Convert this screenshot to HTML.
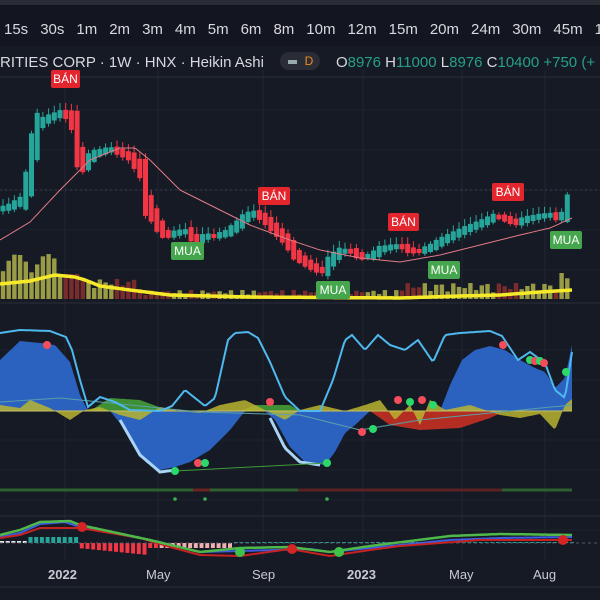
<!DOCTYPE html>
<html><head><meta charset="utf-8"><style>
html,body{margin:0;padding:0;background:#161a25;width:600px;height:600px;overflow:hidden;font-family:"Liberation Sans",sans-serif}
#top{position:absolute;left:0;top:0;width:600px;height:46px;background:#131620;border-top:5px solid #2a2d36;box-sizing:border-box}
#tf{position:absolute;top:16px;left:4px;color:#d8d9de;font-size:15px;white-space:nowrap;word-spacing:0}
#tf span{margin-right:12px}
#title{position:absolute;top:54px;left:0;color:#d8d9de;font-size:15px;white-space:nowrap}
.g{color:#26a08a}
.lbl{position:absolute;color:#fff;font-size:12px;text-align:center;border-radius:2px;line-height:18px}
.r{background:#e3262d}.gr{background:#45a64d}
.ax{position:absolute;top:567px;color:#c9cbd1;font-size:13px}
svg{position:absolute;left:0;top:0}
</style></head><body>
<div id="top"><div id="tf"><span>15s</span><span>30s</span><span>1m</span><span>2m</span><span>3m</span><span>4m</span><span>5m</span><span>6m</span><span>8m</span><span>10m</span><span>12m</span><span>15m</span><span>20m</span><span>24m</span><span>30m</span><span>45m</span><span>1</span></div></div>
<svg id="s" width="600" height="600"></svg>
<div id="title">RITIES CORP · 1W · HNX · Heikin Ashi<span style="display:inline-block;margin-left:16px;width:40px;height:18px;background:#2a2d36;border-radius:9px;vertical-align:middle;position:relative;top:-2px;font-size:12px;color:#f08a24;text-align:right;line-height:18px"><span style="display:inline-block;width:9px;height:4px;background:#9aa;margin-right:8px;vertical-align:middle"></span>D&nbsp;&nbsp;</span><span style="margin-left:16px">O<span class="g">8976</span> H<span class="g">11000</span> L<span class="g">8976</span> C<span class="g">10400 +750 (+</span></span></div>
<div class="lbl r" style="left:51px;top:70px;width:29px">BÁN</div>
<div class="lbl r" style="left:258px;top:187px;width:32px">BÁN</div>
<div class="lbl r" style="left:388px;top:213px;width:31px">BÁN</div>
<div class="lbl r" style="left:492px;top:183px;width:32px">BÁN</div>
<div class="lbl gr" style="left:171px;top:242px;width:33px">MUA</div>
<div class="lbl gr" style="left:316px;top:281px;width:34px">MUA</div>
<div class="lbl gr" style="left:428px;top:261px;width:32px">MUA</div>
<div class="lbl gr" style="left:550px;top:231px;width:32px">MUA</div>
<div class="ax" style="left:48px;font-weight:bold">2022</div>
<div class="ax" style="left:146px">May</div>
<div class="ax" style="left:252px">Sep</div>
<div class="ax" style="left:347px;font-weight:bold">2023</div>
<div class="ax" style="left:449px">May</div>
<div class="ax" style="left:533px">Aug</div>
<script>
const S=document.getElementById('s');let h='';
function interp(pts,x){for(let i=0;i<pts.length-1;i++){if(x>=pts[i][0]&&x<=pts[i+1][0]){const t=(x-pts[i][0])/(pts[i+1][0]-pts[i][0]);return pts[i][1]+t*(pts[i+1][1]-pts[i][1]);}}return pts[pts.length-1][1];}
function path(pts,step){let d='';for(let x=pts[0][0];x<=pts[pts.length-1][0];x+=step||2){d+=(d?'L':'M')+x+' '+interp(pts,x).toFixed(1);}return d;}
function area(pts,base){return path(pts)+'L'+pts[pts.length-1][0]+' '+base+'L'+pts[0][0]+' '+base+'Z';}
[65,158,263,363,462,545].forEach(x=>h+=`<line x1="${x}" y1="70" x2="${x}" y2="560" stroke="#222633"/>`);
[110,150,190,230,270,350,380,440,470,500,530].forEach(y=>h+=`<line x1="0" y1="${y}" x2="600" y2="${y}" stroke="#1d212c"/>`);
h+=`<line x1="0" y1="77" x2="600" y2="77" stroke="#2a2d36"/>`;
h+=`<line x1="0" y1="190" x2="600" y2="190" stroke="#3a3f4c" stroke-dasharray="2 3"/>`;
h+=`<line x1="0" y1="303" x2="600" y2="303" stroke="#2a2d36"/><line x1="0" y1="516" x2="600" y2="516" stroke="#2a2d36"/><line x1="0" y1="587" x2="600" y2="587" stroke="#2a2d36"/>`;
const P=[[0,208],[10,205],[22,198],[28,170],[35,125],[45,118],[60,112],[70,117],[75,140],[80,170],[85,160],[95,152],[110,148],[120,152],[130,157],[140,172],[145,200],[155,222],[165,235],[175,232],[185,230],[195,240],[205,235],[215,235],[225,232],[235,225],[245,215],[255,212],[265,220],[275,230],[285,240],[295,255],[305,262],[315,268],[322,270],[330,258],[340,250],[350,250],[360,256],[370,255],[380,248],[390,246],[400,245],[410,250],[420,250],[430,246],[440,240],[450,235],[465,228],[480,222],[495,215],[505,218],[515,222],[525,218],[540,215],[550,214],[560,218],[565,205],[572,192]];
let prev=interp(P,0);
for(let x=3;x<=572;x+=5.7){const c=interp(P,x);const up=c<prev;const col=up?'#26a69a':'#f23645';const d=Math.abs(c-prev);const top=Math.min(c,prev)-d*0.4-1,bh=Math.max(4,d*1.8+4);const n=Math.abs(Math.sin(x*1.7))*5+2;
h+=`<line x1="${x}" y1="${top-n}" x2="${x}" y2="${top+bh+n*0.5}" stroke="${col}" stroke-width="1"/><rect x="${x-2.5}" y="${top}" width="5" height="${bh}" fill="${col}"/>`;
const v=(x<60?25+Math.abs(Math.sin(x))*20:x<80?25:x<140?10+Math.abs(Math.sin(x*2))*10:x<400?3+Math.abs(Math.sin(x*3))*6:6+Math.abs(Math.sin(x*2))*10)+(x>560?10:0);
h+=`<rect x="${x-2.2}" y="${299-v}" width="4.4" height="${v}" fill="${up?'#9a9c45':'#7a2c2c'}"/>`;prev=c;}
const MA=[[0,240],[30,222],[60,190],[90,160],[120,148],[135,148],[150,160],[180,190],[220,210],[250,225],[290,240],[320,250],[360,258],[400,262],[440,255],[480,245],[520,235],[550,228],[572,218]];
h+=`<path d="${path(MA)}" fill="none" stroke="#e07a86" stroke-width="1"/>`;
const VM=[[0,284],[30,281],[55,275],[75,277],[85,280],[100,286],[130,290],[170,295],[250,297],[400,298],[460,296],[500,295],[540,292],[572,290]];
h+=`<path d="${path(VM)}" fill="none" stroke="#f5e92a" stroke-width="3.5"/>`;
const Z=411;
h+=`<path d="${area([[90,411],[110,398],[140,400],[170,411]],Z)}" fill="#3f8f35"/>`;
h+=`<path d="${area([[240,411],[255,405],[290,405],[300,411]],Z)}" fill="#3f8f35"/>`;
const W=[[0,360],[20,341],[40,343],[55,345],[70,362],[80,395],[88,411],[110,411],[130,435],[145,462],[160,470],[175,467],[190,462],[210,450],[230,430],[245,411],[265,411],[275,420],[290,447],[305,462],[325,465],[335,452],[345,433],[355,425],[370,411],[440,411],[450,385],[462,360],[475,350],[490,346],[505,350],[520,360],[535,368],[545,372],[555,388],[565,378],[572,345]];
h+=`<path d="${area(W,Z)}" fill="#2b62c0"/>`;
h+=`<path d="${path([[120,420],[140,455],[160,472],[175,470]])}" fill="none" stroke="#a8d4f5" stroke-width="3"/>`;
h+=`<path d="${path([[270,418],[285,448],[300,462],[320,465]])}" fill="none" stroke="#a8d4f5" stroke-width="3"/>`;
h+=`<path d="${area([[370,411],[390,425],[420,430],[460,428],[490,418],[505,411]],Z)}" fill="#b32d22"/>`;
const Y=[[0,405],[20,408],[30,400],[50,408],[70,420],[85,410],[100,407],[120,415],[140,420],[160,407],[180,411],[200,413],[220,405],[245,400],[265,410],[285,420],[300,410],[320,405],[345,411],[365,405],[380,400],[395,420],[410,405],[420,425],[430,400],[445,410],[470,405],[500,415],[520,418],[540,414],[555,430],[565,405],[572,399]];
h+=`<path d="${area(Y,Z)}" fill="#b8b530" opacity="0.85"/>`;
h+=`<line x1="0" y1="${Z}" x2="572" y2="${Z}" stroke="#c8c060" stroke-width="1"/>`;
h+=`<path d="${path([[0,402],[60,398],[120,404],[200,412],[300,415],[360,430],[420,420],[500,412],[572,405]])}" fill="none" stroke="#5aa0a8" stroke-width="1"/>`;
const L=[[0,333],[20,330],[50,331],[66,337],[72,350],[80,380],[88,407],[100,397],[115,402],[130,410],[160,411],[172,406],[185,390],[195,398],[205,406],[215,398],[228,340],[235,333],[248,332],[258,338],[270,362],[285,397],[300,411],[320,411],[333,380],[345,340],[352,335],[365,350],[378,335],[390,345],[405,350],[418,340],[433,362],[445,335],[460,333],[490,331],[502,336],[518,360],[530,352],[545,363],[555,390],[565,398],[572,352]];
h+=`<path d="${path(L)}" fill="none" stroke="#4fb8ee" stroke-width="2"/>`;
h+=`<line x1="175" y1="471" x2="327" y2="463" stroke="#3f9a3a" stroke-width="1"/>`;
const dots=[[47,345,'r'],[175,471,'g'],[198,463,'r'],[205,463,'g'],[327,463,'g'],[270,402,'r'],[362,432,'r'],[373,429,'g'],[398,400,'r'],[410,402,'g'],[422,400,'r'],[433,405,'g'],[503,345,'r'],[530,360,'g'],[535,361,'r'],[540,361,'g'],[544,363,'r'],[566,372,'g']];
dots.forEach(d=>h+=`<circle cx="${d[0]}" cy="${d[1]}" r="4" fill="${d[2]=='r'?'#f24d5a':'#2bd96b'}"/>`);
h+=`<line x1="0" y1="490" x2="572" y2="490" stroke="#2e5f2e" stroke-width="3"/><line x1="193" y1="490" x2="210" y2="490" stroke="#6a2424" stroke-width="3"/><line x1="298" y1="490" x2="502" y2="490" stroke="#5a2222" stroke-width="3"/>`;
[[175,499],[205,499],[327,499]].forEach(d=>h+=`<circle cx="${d[0]}" cy="${d[1]}" r="1.8" fill="#3cb050"/>`);
for(let x=2;x<572;x+=5.7){let v,c;if(x<78){v=x<30?2:6;c=x<25?'#e8e8e8':'#26a69a';}else if(x<230){v=-(x<150?5+((x-78)/10):5);c=x<160?'#f23645':'#f0b0b0';}else{v=1;c='#26a69a';}
h+=`<rect x="${x-2}" y="${v>0?543-v:543}" width="4" height="${Math.abs(v)}" fill="${c}"/>`;}
h+=`<line x1="0" y1="543" x2="600" y2="543" stroke="#556" stroke-dasharray="3 3"/>`;
h+=`<path d="${path([[0,537],[20,533],[40,524],[65,522],[80,527],[150,540],[200,552],[240,551],[310,549],[330,552],[370,548],[450,540],[500,538],[572,537]])}" fill="none" stroke="#3d5ce0" stroke-width="2"/>`;
h+=`<path d="${path([[0,538],[20,535],[40,528],[80,528],[140,538],[170,547],[200,555],[240,556],[290,549],[330,556],[370,550],[400,546],[480,540],[572,540]])}" fill="none" stroke="#c62222" stroke-width="2"/>`;
h+=`<path d="${path([[0,535],[20,530],[40,522],[70,521],[80,525],[150,540],[200,552],[240,548],[290,547],[330,552],[370,546],[450,536],[500,534],[572,535]])}" fill="none" stroke="#4fb84a" stroke-width="2.5"/>`;
[[82,527,'#d42424'],[240,552,'#3fc24a'],[292,549,'#d42424'],[339,552,'#3fc24a'],[563,540,'#d42424']].forEach(d=>h+=`<circle cx="${d[0]}" cy="${d[1]}" r="5" fill="${d[2]}"/>`);
S.innerHTML=h;
</script>
</body></html>
